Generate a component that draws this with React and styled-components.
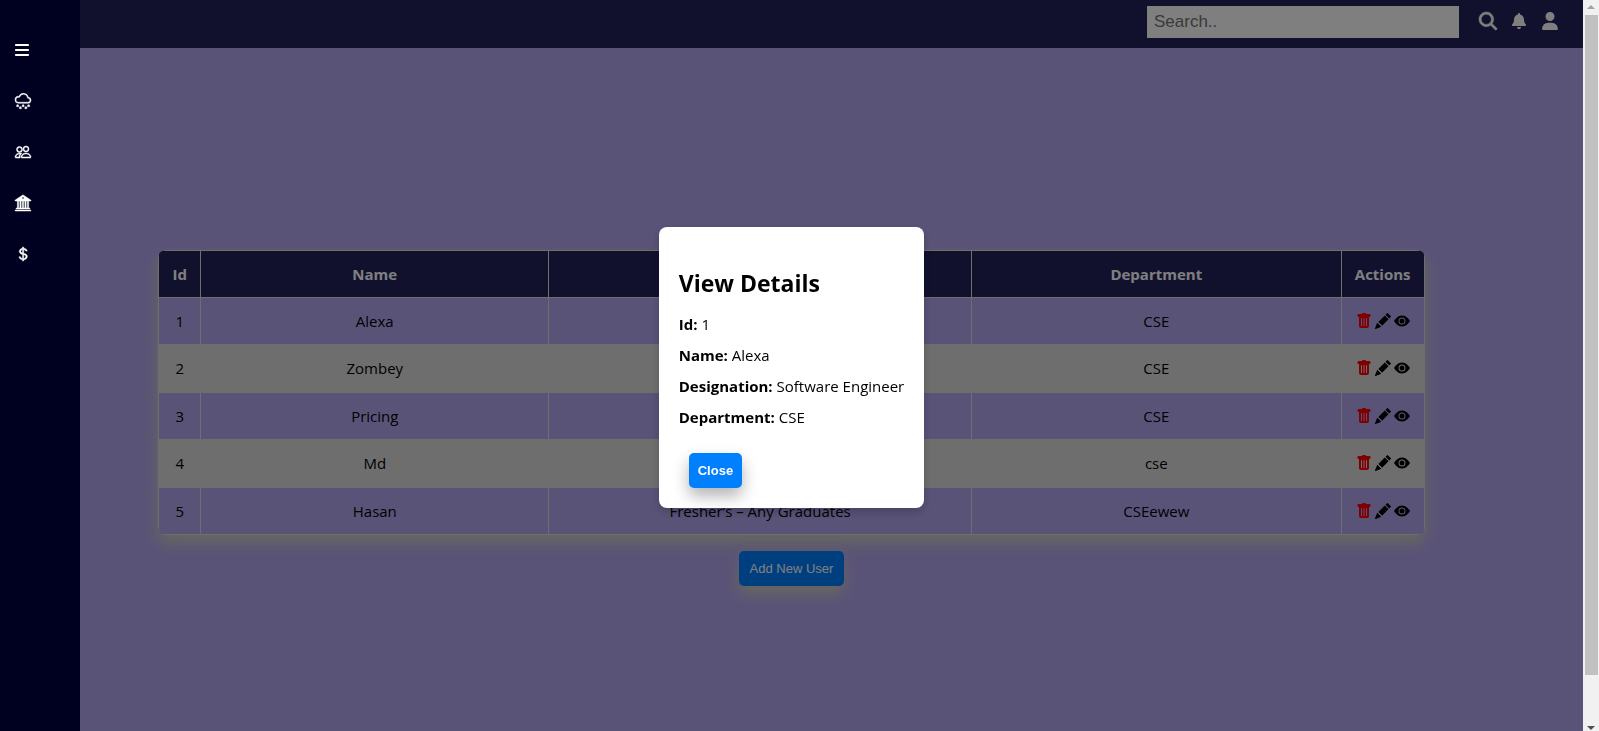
import React from 'react';
import styled, { createGlobalStyle, css } from 'styled-components';
import {
  BsCloudSnow, BsPeople, BsBank2, BsCurrencyDollar, BsTrashFill, BsPencilFill, BsEyeFill,
} from 'react-icons/bs';
import { FaBars, FaMagnifyingGlass, FaBell, FaUser } from 'react-icons/fa6';

const GlobalStyle = createGlobalStyle`
  * { box-sizing: border-box; }
  body {
    margin: 0;
    background: #b4a6f0;
    color: #000;
    font: 15px/20px 'Segoe UI', 'Open Sans', 'Noto Sans', sans-serif;
  }
`;

const Page = styled.div`
  display: flex;
  min-height: 100vh;
`;

const Content = styled.div`
  flex: 1;
  min-width: 0;
  display: flex;
  flex-direction: column;
`;

const Sidebar = styled.nav`
  position: fixed;
  inset: 0 auto 0 0;
  z-index: 3;
  width: 80px;
  padding: 24px 15px;
  background: #000020;
`;

const SidebarLink = styled.a`
  display: flex;
  align-items: center;
  height: 51px;
  color: #fff;
  font-size: 16px;

  svg {
    display: block;
    overflow: visible;
    ${({ $narrow }) => ($narrow ? css`width: 14px;` : css`stroke-width: 0.5;`)}
  }
`;

const TopBar = styled.header`
  display: flex;
  justify-content: flex-end;
  align-items: flex-start;
  height: 48px;
  padding: 6px 24px 0 80px;
  background: #22225c;
`;

const SearchInput = styled.input`
  width: 312px;
  height: 32px;
  margin-right: 20px;
  padding: 0 7px;
  border: 0;
  background: #fff;
  font: 17px 'Liberation Sans', Arial, sans-serif;

  &::placeholder { color: #757575; }
`;

const IconButton = styled.button`
  display: grid;
  place-items: center;
  width: 18px;
  height: 18px;
  margin-top: 6px;
  margin-right: 13px;
  padding: 0;
  border: 0;
  background: none;
  color: #fff;
  font-size: ${({ $size }) => $size || 18}px;
  cursor: pointer;

  &:last-child { margin-right: 0; }

  svg {
    overflow: visible;
    stroke-width: ${({ $stroke }) => $stroke || 0};
  }
`;

const Main = styled.main`
  flex: 1;
  display: flex;
  flex-direction: column;
  align-items: center;
  justify-content: center;
  gap: 16px;
  padding-top: 56px;
`;

const TableCard = styled.div`
  width: 80%;
  overflow: hidden;
  border-radius: 8px;
  box-shadow: 0 8px 16px rgba(208, 212, 184, 0.9);
`;

const UserTable = styled.table`
  width: 100%;
  border-collapse: collapse;
  table-layout: fixed;
  background: #b4a6f0;
`;

const HeadCell = styled.th`
  width: ${({ $width }) => $width};
  height: 47px;
  padding: 0;
  border: 1px solid #ddd;
  background: #22225c;
  color: #fff;
  text-align: center;
`;

const Row = styled.tr`
  height: 47px;
  &:nth-child(even) {
    height: 48px;
    background: #ddd;
  }
`;

const Cell = styled.td`
  padding: 0;
  border: 1px solid #ddd;
  text-align: center;
`;

const Actions = styled.div`
  display: flex;
  justify-content: center;
  gap: 3px;
`;

const ActionButton = styled.button`
  padding: 0;
  border: 0;
  background: none;
  color: ${({ $danger }) => ($danger ? '#f00' : '#000')};
  font-size: 16px;
  line-height: 0;
  cursor: pointer;
`;

const PrimaryButton = styled.button`
  height: 35px;
  padding: 0 ${({ $bold }) => ($bold ? 9 : 11)}px;
  border: 0;
  border-radius: 5px;
  background: #007fff;
  box-shadow: 0 8px 16px ${({ $glow }) => $glow || 'rgba(0, 0, 0, 0.3)'};
  color: #fff;
  font: ${({ $bold }) => ($bold ? 'bold' : 'normal')} 13px 'Liberation Sans', Arial, sans-serif;
  cursor: pointer;
`;

const Overlay = styled.div`
  position: fixed;
  inset: 0 16px 0 0;
  z-index: 2;
  display: flex;
  align-items: center;
  justify-content: center;
  padding-top: 4px;
  background: rgba(0, 0, 0, 0.5);
`;

const Modal = styled.section`
  padding: 40px 20px 20px;
  border-radius: 8px;
  background: #fff;
  box-shadow: 0 4px 8px rgba(0, 0, 0, 0.2);
`;

const ModalTitle = styled.h2`
  margin: 0 0 15px;
  font-size: 23px;
  line-height: 32px;
`;

const Detail = styled.p`
  margin: 0 0 11px;
`;

const ModalActions = styled.div`
  padding: 15px 10px 0;
`;

const ScrollTrack = styled.div`
  position: sticky;
  top: 0;
  display: flex;
  flex-direction: column;
  align-items: center;
  justify-content: space-between;
  width: 16px;
  height: 100vh;
  padding: 5px 0 1px;
  background: #f1f1f1;
`;

const ScrollArrow = styled.span`
  border: 4px solid transparent;
  border-top-width: 0;
  border-bottom: 4px solid #a3a3a3;
  ${({ $down }) => $down && css`
    border-top: 4px solid #505050;
    border-bottom-width: 0;
  `}
`;

const ScrollThumb = styled.span`
  flex: 1;
  width: 13px;
  margin: 6px 0 51px;
  background: #c1c1c1;
`;

const links = [
  { label: 'Menu', Icon: FaBars, narrow: true },
  { label: 'Weather', Icon: BsCloudSnow },
  { label: 'Users', Icon: BsPeople },
  { label: 'Bank', Icon: BsBank2 },
  { label: 'Payments', Icon: BsCurrencyDollar },
];

const columns = [
  { title: 'Id', width: '42px' },
  { title: 'Name', width: '27.5%' },
  { title: 'Designation', width: '33.4%' },
  { title: 'Department', width: 'auto' },
  { title: 'Actions', width: '83px' },
];

const users = [
  { id: 1, name: 'Alexa', designation: 'Software Engineer', department: 'CSE' },
  { id: 2, name: 'Zombey', designation: 'Software Engineer', department: 'CSE' },
  { id: 3, name: 'Pricing', designation: 'Software Engineer', department: 'CSE' },
  { id: 4, name: 'Md', designation: 'Engineer', department: 'cse' },
  { id: 5, name: 'Hasan', designation: 'Fresher’s – Any Graduates', department: 'CSEewew' },
];

export default function App() {
  const viewed = users[0];
  return (
    <>
      <GlobalStyle />
      <Page>
        <Sidebar aria-label="Main">
          {links.map(({ label, Icon, narrow }) => (
            <SidebarLink key={label} href="#" aria-label={label} $narrow={narrow}><Icon /></SidebarLink>
          ))}
        </Sidebar>
        <Content>
          <TopBar>
            <SearchInput type="text" placeholder="Search.." aria-label="Search" />
            <IconButton aria-label="Search" $stroke={16}><FaMagnifyingGlass /></IconButton>
            <IconButton aria-label="Notifications" $size={16}><FaBell /></IconButton>
            <IconButton aria-label="Account"><FaUser /></IconButton>
          </TopBar>
          <Main>
            <TableCard>
              <UserTable>
                <thead>
                  <tr>
                    {columns.map(({ title, width }) => (
                      <HeadCell key={title} scope="col" $width={width}>{title}</HeadCell>
                    ))}
                  </tr>
                </thead>
                <tbody>
                  {users.map((user) => (
                    <Row key={user.id}>
                      <Cell>{user.id}</Cell>
                      <Cell>{user.name}</Cell>
                      <Cell>{user.designation}</Cell>
                      <Cell>{user.department}</Cell>
                      <Cell>
                        <Actions>
                          <ActionButton aria-label="Delete" $danger><BsTrashFill /></ActionButton>
                          <ActionButton aria-label="Edit"><BsPencilFill /></ActionButton>
                          <ActionButton aria-label="View"><BsEyeFill /></ActionButton>
                        </Actions>
                      </Cell>
                    </Row>
                  ))}
                </tbody>
              </UserTable>
            </TableCard>
            <PrimaryButton $glow="rgba(208, 212, 184, 0.9)">Add New User</PrimaryButton>
          </Main>
        </Content>
        <ScrollTrack aria-hidden="true">
          <ScrollArrow />
          <ScrollThumb />
          <ScrollArrow $down />
        </ScrollTrack>
      </Page>
      <Overlay>
        <Modal role="dialog" aria-modal="true" aria-labelledby="details-title">
          <ModalTitle id="details-title">View Details</ModalTitle>
          <Detail><strong>Id:</strong> {viewed.id}</Detail>
          <Detail><strong>Name:</strong> {viewed.name}</Detail>
          <Detail><strong>Designation:</strong> {viewed.designation}</Detail>
          <Detail><strong>Department:</strong> {viewed.department}</Detail>
          <ModalActions>
            <PrimaryButton $bold>Close</PrimaryButton>
          </ModalActions>
        </Modal>
      </Overlay>
    </>
  );
}
